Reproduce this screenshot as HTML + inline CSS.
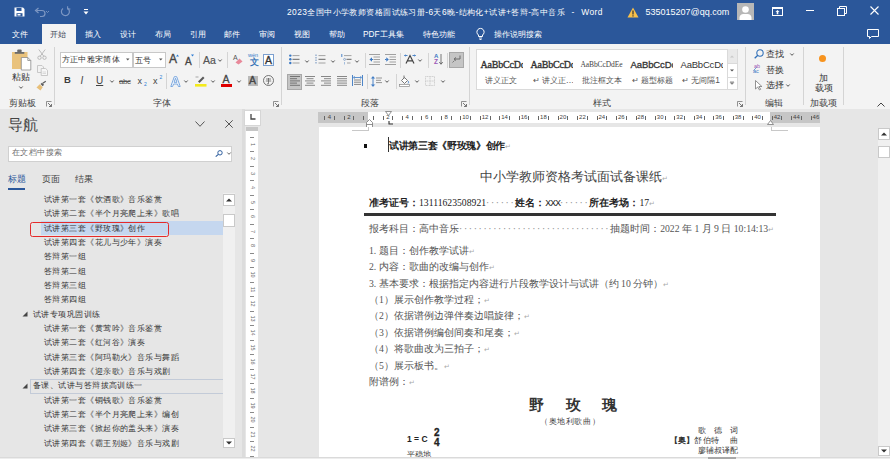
<!DOCTYPE html>
<html><head><meta charset="utf-8">
<style>
*{margin:0;padding:0;box-sizing:border-box}
html,body{width:890px;height:459px;overflow:hidden;background:#e6e6e6;font-family:"Liberation Sans",sans-serif;color:#262626}
.a{position:absolute;white-space:nowrap}
svg{position:absolute;overflow:visible}
#title{left:0;top:0;width:890px;height:44px;background:#2b579a}
.w{color:#fff}
.tab{top:29px;font-size:8.3px;line-height:10px;color:#fff}
#ribbon{left:0;top:44px;width:890px;height:65px;background:#f3f3f3}
.sep{width:1px;background:#d4d4d4}
.lbl{top:98px;font-size:9px;line-height:10px;color:#444}
.nav{font-size:8px;line-height:10px;color:#333;letter-spacing:0.44px}
.rn{font-size:6px;line-height:7px;color:#444}
.pm{color:#aaa;font-size:7px;font-family:"Liberation Sans",sans-serif;font-weight:normal}
.dots,.dots2{color:#888;font-weight:normal;letter-spacing:1.65px}
.doc{font-family:"Liberation Serif",serif;color:#222}
.doc.b{color:#444}
</style></head><body>
<div id="title" class="a"></div>
<!-- QAT -->
<svg style="left:14px;top:7px" width="11" height="10" viewBox="0 0 11 10"><path d="M0.5 0.5h8.5l1.5 1.5v7.5h-10z" fill="#fff"/><rect x="2.5" y="1" width="5" height="3" fill="#2b579a"/><rect x="2.5" y="6.2" width="6" height="3.3" fill="#2b579a"/><rect x="3.5" y="7" width="3" height="1.5" fill="#fff"/></svg>
<svg style="left:34px;top:7px" width="16" height="10" viewBox="0 0 16 10"><path d="M2.5 3.5h5.5a3 3 0 0 1 0 6h-2" fill="none" stroke="#7d97c3" stroke-width="1.2"/><path d="M4.5 1l-3 2.5 3 2.5" fill="none" stroke="#7d97c3" stroke-width="1.2"/><path d="M12 4l1.5 1.5 1.5-1.5" fill="none" stroke="#7d97c3" stroke-width="0.9"/></svg>
<svg style="left:60px;top:6px" width="11" height="11" viewBox="0 0 11 11"><path d="M7.5 2.2A4 4 0 1 1 3 2.4" fill="none" stroke="#7d97c3" stroke-width="1.2"/><path d="M7.6 0.2v2.8h2.8" fill="none" stroke="#7d97c3" stroke-width="1.1"/></svg>
<svg style="left:83px;top:9px" width="6" height="6" viewBox="0 0 6 6"><rect x="1" y="0" width="4" height="1" fill="#fff"/><path d="M0.5 2.5h5l-2.5 3z" fill="#fff"/></svg>
<div class="a w" style="left:287px;top:7px;font-size:8.4px;line-height:10px;letter-spacing:0.42px">2023全国中小学教师资格面试练习册-6天6晚-结构化+试讲+答辩-高中音乐&nbsp;&nbsp;<span style="margin-left:1px">-</span>&nbsp;&nbsp;<span style="margin-left:1px">Word</span></div>
<svg style="left:627px;top:7px" width="12" height="11" viewBox="0 0 12 11"><path d="M6 0.5L11.5 10.5H0.5z" fill="#f8c04a"/><rect x="5.4" y="3.5" width="1.2" height="4" fill="#333"/><rect x="5.4" y="8.3" width="1.2" height="1.2" fill="#333"/></svg>
<div class="a w" style="left:645.5px;top:6.5px;font-size:9px;line-height:11px">535015207@qq.com</div>
<div class="a" style="left:737px;top:3px;width:17px;height:17px;background:#b7b7b7"></div>
<svg style="left:737px;top:3px" width="17" height="17" viewBox="0 0 17 17"><circle cx="8.5" cy="6.5" r="3.3" fill="#fff"/><path d="M2.5 17v-2.5a4 4 0 0 1 4-3.5h4a4 4 0 0 1 4 3.5V17z" fill="#fff"/></svg>
<svg style="left:772px;top:7px" width="11" height="9" viewBox="0 0 11 9"><rect x="0.5" y="0.5" width="10" height="8" fill="none" stroke="#fff" stroke-width="1"/><rect x="0.5" y="0.5" width="10" height="1.5" fill="#fff"/><path d="M5.5 3l-2 2h1.2v2.2h1.6V5h1.2z" fill="#fff"/></svg>
<div class="a" style="left:806px;top:10px;width:8px;height:1px;background:#fff"></div>
<svg style="left:837px;top:6px" width="10" height="10" viewBox="0 0 10 10"><rect x="0.5" y="2.5" width="7" height="7" fill="none" stroke="#fff" stroke-width="1"/><path d="M2.5 2.5V0.5h7v7h-2" fill="none" stroke="#fff" stroke-width="1"/></svg>
<svg style="left:870px;top:6px" width="9" height="9" viewBox="0 0 9 9"><path d="M0.5 0.5l8 8M8.5 0.5l-8 8" stroke="#fff" stroke-width="1.1"/></svg>
<!-- tabs -->
<div class="a" style="left:42px;top:24px;width:34px;height:21px;background:#f3f3f3"></div>
<div class="a tab" style="left:12px">文件</div>
<div class="a tab" style="left:50px;color:#3d4656">开始</div>
<div class="a tab" style="left:84.5px">插入</div>
<div class="a tab" style="left:120px">设计</div>
<div class="a tab" style="left:154.5px">布局</div>
<div class="a tab" style="left:189.5px">引用</div>
<div class="a tab" style="left:224px">邮件</div>
<div class="a tab" style="left:258.5px">审阅</div>
<div class="a tab" style="left:294px">视图</div>
<div class="a tab" style="left:329px">帮助</div>
<div class="a tab" style="left:363px">PDF工具集</div>
<div class="a tab" style="left:423px">特色功能</div>
<svg style="left:476px;top:28px" width="9" height="12" viewBox="0 0 9 12"><path d="M2.5 8.5V7A3.6 3.6 0 1 1 6.5 7v1.5z" fill="none" stroke="#fff" stroke-width="1"/><path d="M3 10h3M3.5 11.5h2" stroke="#fff" stroke-width="0.9"/></svg>
<div class="a tab" style="left:494px">操作说明搜索</div>
<svg style="left:867px;top:29px" width="12" height="10" viewBox="0 0 12 10"><path d="M0.5 0.5h11v7h-7l-2 2v-2h-2z" fill="none" stroke="#fff" stroke-width="1"/></svg>

<div id="ribbon" class="a"></div>
<div class="a" style="left:0;top:108.5px;width:890px;height:1px;background:#e0e0e0"></div>
<!-- clipboard group -->
<svg style="left:12px;top:49px" width="20" height="22" viewBox="0 0 20 22"><rect x="0" y="3" width="15.5" height="17" fill="#e9c27c"/><rect x="2.8" y="3" width="9.5" height="1.8" fill="#6b6b6b"/><rect x="5.2" y="0.4" width="4.5" height="2.8" rx="1" fill="#6b6b6b"/><path d="M9.3 8.5h6.5l3 3v9.5h-9.5z" fill="#fff" stroke="#8c8c8c" stroke-width="0.8"/><path d="M15.8 8.5v3h3" fill="none" stroke="#8c8c8c" stroke-width="0.8"/></svg>
<div class="a" style="left:12px;top:72px;font-size:8.5px;line-height:10px;color:#333">粘贴</div>
<svg style="left:19px;top:86px" width="4" height="3" viewBox="0 0 4 3"><path d="M0.3 0.5l1.7 1.8 1.7-1.8" fill="none" stroke="#444" stroke-width="0.9"/></svg>
<svg style="left:37px;top:49px" width="10" height="11" viewBox="0 0 10 11"><path d="M1.8 0.5l5.2 7M8.2 0.5L3 7.5" stroke="#b4b4b4" stroke-width="0.9" fill="none"/><circle cx="2.5" cy="8.7" r="1.7" fill="none" stroke="#b4b4b4" stroke-width="0.9"/><circle cx="7.5" cy="8.7" r="1.7" fill="none" stroke="#b4b4b4" stroke-width="0.9"/></svg>
<svg style="left:37px;top:65px" width="11" height="11" viewBox="0 0 11 11"><path d="M0.5 0.5h4.5l1.5 1.5v5.5h-6z" fill="#f3f3f3" stroke="#bdbdbd" stroke-width="0.8"/><path d="M4.2 3.5h4.5l1.8 1.8v5.2h-6.3z" fill="#f7f7f7" stroke="#bdbdbd" stroke-width="0.8"/><path d="M5.5 7h3.5M5.5 8.5h3.5" stroke="#c8c8c8" stroke-width="0.6"/></svg>
<svg style="left:36px;top:81px" width="11" height="10" viewBox="0 0 11 10"><path d="M0.5 6.5l3.2-3.2 3 3-2.2 3.2z" fill="#e8bf78"/><path d="M4.5 3l1.5-1.3 2 2-1.3 1.5z" fill="#5d5d5d"/><path d="M6.8 2.3l3-2" stroke="#5d5d5d" stroke-width="1.2"/></svg>
<div class="a lbl" style="left:9px">剪贴板</div>
<svg style="left:46px;top:101px" width="6" height="6" viewBox="0 0 6 6"><path d="M0.5 5.5v-5h5" fill="none" stroke="#777" stroke-width="0.8"/><path d="M2 2l3.3 3.3M5.5 3v2.5H3" fill="none" stroke="#555" stroke-width="0.8"/></svg>
<div class="a sep" style="left:54px;top:47px;height:58px"></div>
<!-- font group -->
<div class="a" style="left:60px;top:52px;width:73px;height:16px;background:#fff;border:1px solid #c8c8c8"></div>
<div class="a" style="left:61.5px;top:55px;font-size:8px;line-height:10px;color:#333;letter-spacing:0.38px">方正中雅宋简体</div>
<svg style="left:126px;top:58px" width="4" height="3" viewBox="0 0 4 3"><path d="M0 0.5h3.5l-1.75 2z" fill="#555"/></svg>
<div class="a" style="left:133px;top:52px;width:33px;height:16px;background:#fff;border:1px solid #c8c8c8"></div>
<div class="a" style="left:135px;top:55px;font-size:8.4px;line-height:10px;color:#333">五号</div>
<svg style="left:158.5px;top:58px" width="4" height="3" viewBox="0 0 4 3"><path d="M0 0.5h3.5l-1.75 2z" fill="#555"/></svg>
<div class="a" style="left:169px;top:53px;font-size:12px;line-height:13px;color:#444;-webkit-text-stroke:0.35px #444">A</div>
<svg style="left:176px;top:54px" width="3" height="3" viewBox="0 0 3 3"><path d="M0 2.5l1.5-2 1.5 2z" fill="#2b7cd3"/></svg>
<div class="a" style="left:185px;top:56px;font-size:10px;line-height:11px;color:#444;-webkit-text-stroke:0.3px #444">A</div>
<svg style="left:191px;top:54px" width="3" height="3" viewBox="0 0 3 3"><path d="M0 0.5h3l-1.5 2z" fill="#2b7cd3"/></svg>
<div class="a sep" style="left:199px;top:52px;height:16px"></div>
<div class="a" style="left:203px;top:54px;font-size:10.5px;line-height:12px;color:#555;-webkit-text-stroke:0.2px #555">Aa</div>
<svg style="left:218px;top:59px" width="4" height="3" viewBox="0 0 4 3"><path d="M0.3 0.5l1.7 1.8 1.7-1.8" fill="none" stroke="#444" stroke-width="0.9"/></svg>
<div class="a sep" style="left:227px;top:52px;height:16px"></div>
<div class="a" style="left:233px;top:54px;font-size:7px;line-height:8px;color:#555">A</div>
<svg style="left:235px;top:58px" width="8" height="7" viewBox="0 0 8 7"><path d="M0.5 4.5l4-4 3 3-4 3z" fill="#e8899a"/></svg>
<div class="a" style="left:248px;top:52px;font-size:5.5px;line-height:6px;color:#3a7fc9">wén</div>
<div class="a" style="left:249.5px;top:56.5px;font-size:9px;line-height:10px;color:#2b6cb3;-webkit-text-stroke:0.25px #2b6cb3">文</div>
<div class="a" style="left:263px;top:54px;width:11px;height:12px;border:1px solid #7b9fcf;background:#fff"></div>
<div class="a" style="left:265px;top:54.5px;font-size:10.5px;line-height:11px;color:#333;-webkit-text-stroke:0.35px #333">A</div>
<div class="a" style="left:64px;top:74px;font-size:9.5px;line-height:11px;font-weight:bold;color:#3c3c3c">B</div>
<div class="a" style="left:80.5px;top:75px;font-size:10px;line-height:11px;font-style:italic;color:#444">I</div>
<div class="a" style="left:96px;top:75px;font-size:10px;line-height:11px;color:#444;text-decoration:underline">U</div>
<svg style="left:109.5px;top:80px" width="4" height="3" viewBox="0 0 4 3"><path d="M0.3 0.5l1.7 1.8 1.7-1.8" fill="none" stroke="#444" stroke-width="0.9"/></svg>
<div class="a" style="left:119px;top:77px;font-size:8px;line-height:9px;color:#555;text-decoration:line-through;letter-spacing:-0.5px">abc</div>
<div class="a" style="left:137.5px;top:75.5px;font-size:9px;line-height:10px;color:#444">x</div>
<div class="a" style="left:144px;top:81px;font-size:5px;line-height:6px;color:#2b7cd3">2</div>
<div class="a" style="left:153px;top:75.5px;font-size:9px;line-height:10px;color:#444">x</div>
<div class="a" style="left:159.5px;top:74px;font-size:5px;line-height:6px;color:#2b7cd3">2</div>
<div class="a sep" style="left:166px;top:73px;height:16px"></div>
<svg style="left:170px;top:76px" width="11" height="11" viewBox="0 0 11 11"><path d="M0.8 10.5L4.3 0.7h2.4l3.5 9.8H8.4L7.5 8h-4l-0.9 2.5zM4 6.3h3L5.5 2.2z" fill="#fff" stroke="#6d9fdc" stroke-width="0.9"/></svg>
<svg style="left:184px;top:80px" width="4" height="3" viewBox="0 0 4 3"><path d="M0.3 0.5l1.7 1.8 1.7-1.8" fill="none" stroke="#444" stroke-width="0.9"/></svg>
<svg style="left:195px;top:75px" width="12" height="12" viewBox="0 0 12 12"><path d="M3 6.5l5-5 1.5 1.5-5 5z" fill="#5a5a5a"/><path d="M0.5 2h3" stroke="#888" stroke-width="0.7"/><rect x="0" y="9" width="11.5" height="2.6" fill="#f4ea1c"/></svg>
<svg style="left:211px;top:80px" width="4" height="3" viewBox="0 0 4 3"><path d="M0.3 0.5l1.7 1.8 1.7-1.8" fill="none" stroke="#444" stroke-width="0.9"/></svg>
<div class="a" style="left:222.5px;top:74px;font-size:10.5px;line-height:11px;color:#444;-webkit-text-stroke:0.3px #444">A</div>
<div class="a" style="left:221px;top:84px;width:11px;height:3px;background:#e00000"></div>
<svg style="left:237px;top:80px" width="4" height="3" viewBox="0 0 4 3"><path d="M0.3 0.5l1.7 1.8 1.7-1.8" fill="none" stroke="#444" stroke-width="0.9"/></svg>
<div class="a" style="left:248px;top:76px;width:10px;height:10px;background:#b9b9b9"></div>
<div class="a" style="left:249px;top:75px;font-size:10.5px;line-height:11px;color:#444;-webkit-text-stroke:0.35px #444">A</div>
<svg style="left:263px;top:75px" width="11" height="11" viewBox="0 0 11 11"><circle cx="5.5" cy="5.5" r="5" fill="none" stroke="#555" stroke-width="0.8"/><path d="M3 4h5M2.8 6h5.4M5.5 3v5.5M4 8.8h2" stroke="#555" stroke-width="0.7"/></svg>
<div class="a lbl" style="left:153px">字体</div>
<svg style="left:273px;top:101px" width="6" height="6" viewBox="0 0 6 6"><path d="M0.5 5.5v-5h5" fill="none" stroke="#777" stroke-width="0.8"/><path d="M2 2l3.3 3.3M5.5 3v2.5H3" fill="none" stroke="#555" stroke-width="0.8"/></svg>
<div class="a sep" style="left:281px;top:47px;height:58px"></div>
<!-- paragraph group -->
<svg style="left:289px;top:54px" width="11" height="11" viewBox="0 0 11 11"><circle cx="1.3" cy="1.6" r="1.2" fill="#3a78c3"/><circle cx="1.3" cy="5.3" r="1.2" fill="#3a78c3"/><circle cx="1.3" cy="9" r="1.2" fill="#3a78c3"/><path d="M3.5 1.6h7M3.5 9h7" stroke="#9a9a9a" stroke-width="0.9"/><path d="M3.5 5.3h7" stroke="#555" stroke-width="0.9"/></svg>
<svg style="left:305px;top:59.5px" width="4" height="3" viewBox="0 0 4 3"><path d="M0.3 0.5l1.7 1.8 1.7-1.8" fill="none" stroke="#444" stroke-width="0.9"/></svg>
<svg style="left:315px;top:54px" width="11" height="11" viewBox="0 0 11 11"><path d="M1 0.5v10" stroke="#6d8fbd" stroke-width="1" stroke-dasharray="1.5 1"/><path d="M3.5 1.6h7M3.5 9h7" stroke="#9a9a9a" stroke-width="0.9"/><path d="M3.5 5.3h7" stroke="#555" stroke-width="0.9"/></svg>
<svg style="left:330.5px;top:59.5px" width="4" height="3" viewBox="0 0 4 3"><path d="M0.3 0.5l1.7 1.8 1.7-1.8" fill="none" stroke="#444" stroke-width="0.9"/></svg>
<svg style="left:341px;top:54px" width="11" height="11" viewBox="0 0 11 11"><path d="M0.8 0v3" stroke="#3a78c3" stroke-width="0.9"/><circle cx="3.6" cy="5.4" r="1" fill="none" stroke="#6d8fbd" stroke-width="0.7"/><path d="M3.5 8v2.5" stroke="#8fb0d8" stroke-width="0.8"/><path d="M3 1.6h7.5" stroke="#9a9a9a" stroke-width="0.9"/><path d="M5.5 5.3h5" stroke="#555" stroke-width="0.9"/><path d="M6 9h3.5" stroke="#9a9a9a" stroke-width="0.9"/></svg>
<svg style="left:355px;top:59.5px" width="4" height="3" viewBox="0 0 4 3"><path d="M0.3 0.5l1.7 1.8 1.7-1.8" fill="none" stroke="#444" stroke-width="0.9"/></svg>
<div class="a sep" style="left:365px;top:53px;height:15px"></div>
<svg style="left:369px;top:54px" width="11" height="11" viewBox="0 0 11 11"><path d="M0 0.5h11M4.5 3h6.5M4.5 5.5h6.5M4.5 8h6.5M0 10.5h11" stroke="#8a8a8a" stroke-width="0.8"/><path d="M0.5 5.5L3 3.2v4.6z" fill="#3a78c3"/><path d="M2.5 5.5h1.5" stroke="#3a78c3" stroke-width="1.2"/></svg>
<svg style="left:385px;top:54px" width="11" height="11" viewBox="0 0 11 11"><path d="M0 0.5h11M4.5 3h6.5M4.5 5.5h6.5M4.5 8h6.5M0 10.5h11" stroke="#8a8a8a" stroke-width="0.8"/><path d="M3.8 5.5L1.3 3.2v4.6z" fill="#3a78c3"/><path d="M0 5.5h1.5" stroke="#3a78c3" stroke-width="1.2"/></svg>
<div class="a sep" style="left:399.5px;top:53px;height:15px"></div>
<svg style="left:404px;top:54px" width="12" height="10" viewBox="0 0 12 10"><path d="M2 9.5L6 1.5l4 8M3.5 6.8h5" fill="none" stroke="#444" stroke-width="1.2"/><path d="M0.5 1.5h3M8.5 1.5h3" stroke="#3a78c3" stroke-width="0.9"/><path d="M1.5 0.5l-1 1 1 1M10.5 0.5l1 1-1 1" fill="none" stroke="#3a78c3" stroke-width="0.7"/></svg>
<svg style="left:418px;top:59px" width="4" height="3" viewBox="0 0 4 3"><path d="M0.3 0.5l1.7 1.8 1.7-1.8" fill="none" stroke="#444" stroke-width="0.9"/></svg>
<div class="a sep" style="left:427.5px;top:53px;height:15px"></div>
<div class="a" style="left:434px;top:53px;font-size:6px;line-height:6px;color:#3a78c3;font-weight:bold">A</div>
<div class="a" style="left:434px;top:59px;font-size:6.5px;line-height:6px;color:#9b59b6;font-weight:bold">Z</div>
<svg style="left:439px;top:54px" width="4" height="11" viewBox="0 0 4 11"><path d="M2 0v10M0.3 8l1.7 2.3 1.7-2.3" fill="none" stroke="#555" stroke-width="0.8"/></svg>
<div class="a sep" style="left:446.5px;top:53px;height:15px"></div>
<div class="a" style="left:449px;top:52px;width:15px;height:16px;background:#c5c5c5;border:1px solid #a8a8a8"></div>
<svg style="left:452px;top:55px" width="9" height="9" viewBox="0 0 9 9"><path d="M8 0.5v3.5H3" fill="none" stroke="#6a6a6a" stroke-width="1"/><path d="M4 2.5L2 4l2 1.5" fill="none" stroke="#6a6a6a" stroke-width="1"/><path d="M0.5 7.5l2-2" stroke="#6a6a6a" stroke-width="0.8"/></svg>
<div class="a" style="left:287px;top:74px;width:15px;height:16px;background:#c5c5c5;border:1px solid #a8a8a8"></div>
<svg style="left:289.5px;top:76px" width="10" height="11" viewBox="0 0 10 11"><path d="M0 0.5h10M0 2.7h7M0 4.9h10M0 7.1h7M0 9.3h10" stroke="#6a6a6a" stroke-width="0.9"/></svg>
<svg style="left:305px;top:76px" width="10" height="11" viewBox="0 0 10 11"><path d="M0 0.5h10M1.5 2.7h7M0 4.9h10M1.5 7.1h7M0 9.3h10" stroke="#7a7a7a" stroke-width="0.9"/></svg>
<svg style="left:321px;top:76px" width="10" height="11" viewBox="0 0 10 11"><path d="M0 0.5h10M3 2.7h7M0 4.9h10M3 7.1h7M0 9.3h10" stroke="#7a7a7a" stroke-width="0.9"/></svg>
<svg style="left:337px;top:76px" width="10" height="11" viewBox="0 0 10 11"><path d="M0 0.5h10M0 2.7h10M0 4.9h10M0 7.1h10M0 9.3h10" stroke="#7a7a7a" stroke-width="0.9"/></svg>
<svg style="left:352px;top:75px" width="11" height="12" viewBox="0 0 11 12"><path d="M0.5 0v11M10.5 0v11" stroke="#3a78c3" stroke-width="0.9"/><path d="M2 2.5h7M2.5 1.2L1.5 2.5l1 1.3M8.5 1.2l1 1.3-1 1.3" fill="none" stroke="#3a78c3" stroke-width="0.8"/><path d="M2 5h7M2 7.2h7M2 9.4h7" stroke="#7a7a7a" stroke-width="0.9"/></svg>
<div class="a sep" style="left:366.5px;top:74px;height:15px"></div>
<svg style="left:371px;top:76px" width="11" height="11" viewBox="0 0 11 11"><path d="M2 1v9" stroke="#3a78c3" stroke-width="0.9"/><path d="M0.3 2.5L2 0.5l1.7 2M0.3 8.5L2 10.5l1.7-2" fill="#3a78c3" stroke="#3a78c3" stroke-width="0.6"/><path d="M5 2h6M5 4.3h5M5 6.6h6" stroke="#8a8a8a" stroke-width="0.9"/></svg>
<svg style="left:385px;top:80px" width="4" height="3" viewBox="0 0 4 3"><path d="M0.3 0.5l1.7 1.8 1.7-1.8" fill="none" stroke="#444" stroke-width="0.9"/></svg>
<div class="a sep" style="left:395.5px;top:74px;height:15px"></div>
<svg style="left:399px;top:75px" width="12" height="12" viewBox="0 0 12 12"><path d="M2.5 5.5L5.5 2.5l3 3-3 3z" fill="#fff" stroke="#6a6a6a" stroke-width="0.9"/><path d="M5 0.5v3" stroke="#6a6a6a" stroke-width="0.9"/><path d="M9 6c0.8 1 0.8 2 0 2.5" fill="none" stroke="#3a78c3" stroke-width="0.9"/><rect x="0.5" y="9.5" width="10" height="2" fill="#fff" stroke="#8a8a8a" stroke-width="0.7"/></svg>
<svg style="left:415px;top:80px" width="4" height="3" viewBox="0 0 4 3"><path d="M0.3 0.5l1.7 1.8 1.7-1.8" fill="none" stroke="#444" stroke-width="0.9"/></svg>
<svg style="left:425px;top:76px" width="10" height="10" viewBox="0 0 10 10"><rect x="0.5" y="0.5" width="9" height="9" fill="none" stroke="#c8c8c8" stroke-width="0.9" stroke-dasharray="1 0.6"/><path d="M5 0.5v9M0.5 5h9" stroke="#c8c8c8" stroke-width="0.9" stroke-dasharray="1 0.6"/></svg>
<svg style="left:441px;top:80px" width="4" height="3" viewBox="0 0 4 3"><path d="M0.3 0.5l1.7 1.8 1.7-1.8" fill="none" stroke="#444" stroke-width="0.9"/></svg>
<div class="a lbl" style="left:361px">段落</div>
<svg style="left:461px;top:101px" width="6" height="6" viewBox="0 0 6 6"><path d="M0.5 5.5v-5h5" fill="none" stroke="#777" stroke-width="0.8"/><path d="M2 2l3.3 3.3M5.5 3v2.5H3" fill="none" stroke="#555" stroke-width="0.8"/></svg>
<div class="a sep" style="left:469px;top:47px;height:58px"></div>
<!-- styles -->
<div class="a" style="left:475.5px;top:48.5px;width:262px;height:41px;background:#fff;border:1px solid #dadada"></div>
<div class="a" style="left:727px;top:49px;width:10px;height:14px;background:#e9e9e9"></div>
<div class="a" style="left:727px;top:63px;width:10px;height:1px;background:#dadada"></div>
<div class="a" style="left:727px;top:77px;width:10px;height:1px;background:#dadada"></div>
<div class="a" style="left:726.5px;top:49px;width:1px;height:40px;background:#dadada"></div>
<svg style="left:730px;top:55px" width="4" height="3" viewBox="0 0 4 3"><path d="M0 2.5h4L2 0.5z" fill="#c8c8c8"/></svg>
<svg style="left:730px;top:69px" width="4" height="3" viewBox="0 0 4 3"><path d="M0 0.5h4L2 2.5z" fill="#555"/></svg>
<svg style="left:730px;top:81px" width="4" height="4" viewBox="0 0 4 4"><path d="M0 0.5h4M0 1.5h4L2 3.5z" fill="#777" stroke="#777" stroke-width="0.4"/></svg>
<div class="a" style="left:478px;top:49px;width:44.5px;height:40px;overflow:hidden">
<div class="a" style="left:2.5px;top:10px;font-family:'Liberation Serif',serif;font-size:10px;line-height:11px;color:#333;-webkit-text-stroke:0.35px #333;letter-spacing:-0.2px">AaBbCcDc</div>
<div class="a" style="left:6.5px;top:26px;font-size:8.4px;line-height:10px;color:#555">讲义正文</div></div>
<div class="a" style="left:528px;top:49px;width:44.5px;height:40px;overflow:hidden">
<div class="a" style="left:2.5px;top:10px;font-family:'Liberation Serif',serif;font-size:10px;line-height:11px;color:#333;-webkit-text-stroke:0.35px #333;letter-spacing:-0.2px">AaBbCcDc</div>
<div class="a" style="left:4.5px;top:26px;font-size:8.4px;line-height:10px;color:#555">↵ 讲义正…</div></div>
<div class="a" style="left:578px;top:49px;width:44.5px;height:40px;overflow:hidden">
<div class="a" style="left:2.5px;top:11px;font-family:'Liberation Serif',serif;font-size:7.5px;line-height:10px;color:#444;letter-spacing:-0.1px">AaBbCcDdEe</div>
<div class="a" style="left:4px;top:26px;font-size:8.4px;line-height:10px;color:#555">批注框文本</div></div>
<div class="a" style="left:628px;top:49px;width:44.5px;height:40px;overflow:hidden">
<div class="a" style="left:2.5px;top:10px;font-family:'Liberation Sans',sans-serif;font-size:9.5px;line-height:11px;color:#333;-webkit-text-stroke:0.3px #333;letter-spacing:-0.1px">AaBbCcDc</div>
<div class="a" style="left:4px;top:26px;font-size:8.4px;line-height:10px;color:#555">↵ 题型标题</div></div>
<div class="a" style="left:678px;top:49px;width:44.5px;height:40px;overflow:hidden">
<div class="a" style="left:2.5px;top:10px;font-family:'Liberation Sans',sans-serif;font-size:9.5px;line-height:11px;color:#333;letter-spacing:-0.2px">AaBbCcDdI</div>
<div class="a" style="left:4px;top:26px;font-size:8.4px;line-height:10px;color:#555">↵ 无间隔1</div></div>
<div class="a lbl" style="left:593px">样式</div>
<svg style="left:737px;top:101px" width="6" height="6" viewBox="0 0 6 6"><path d="M0.5 5.5v-5h5" fill="none" stroke="#777" stroke-width="0.8"/><path d="M2 2l3.3 3.3M5.5 3v2.5H3" fill="none" stroke="#555" stroke-width="0.8"/></svg>
<div class="a sep" style="left:745px;top:47px;height:58px"></div>
<!-- editing -->
<svg style="left:754px;top:49px" width="10" height="10" viewBox="0 0 10 10"><circle cx="6" cy="4" r="3.2" fill="none" stroke="#2f6fb8" stroke-width="1.1"/><path d="M3.8 6.2L0.7 9.3" stroke="#2f6fb8" stroke-width="1.3"/></svg>
<div class="a" style="left:766px;top:49px;font-size:8.5px;line-height:10px;color:#333">查找</div>
<svg style="left:790px;top:53px" width="4" height="3" viewBox="0 0 4 3"><path d="M0.3 0.5l1.7 1.8 1.7-1.8" fill="none" stroke="#444" stroke-width="0.9"/></svg>
<div class="a" style="left:754px;top:63.5px;font-size:5.5px;line-height:5px;color:#9b59b6">ab</div>
<div class="a" style="left:753px;top:68.5px;font-size:5.5px;line-height:5px;color:#3a78c3">ac</div>
<svg style="left:753px;top:67px" width="4" height="4" viewBox="0 0 4 4"><path d="M0.5 3.5l3-3" stroke="#3a78c3" stroke-width="0.7"/></svg>
<div class="a" style="left:766px;top:64.5px;font-size:8.5px;line-height:10px;color:#333">替换</div>
<svg style="left:755px;top:79.5px" width="8" height="10" viewBox="0 0 8 10"><path d="M0.5 0.5v8.5l2.2-2 1.8 3 1.2-0.7-1.8-2.8h3z" fill="#fff" stroke="#777" stroke-width="0.8"/></svg>
<div class="a" style="left:766px;top:80px;font-size:8.5px;line-height:10px;color:#333">选择</div>
<svg style="left:785.5px;top:84px" width="4" height="3" viewBox="0 0 4 3"><path d="M0.3 0.5l1.7 1.8 1.7-1.8" fill="none" stroke="#444" stroke-width="0.9"/></svg>
<div class="a lbl" style="left:765px">编辑</div>
<div class="a sep" style="left:803px;top:47px;height:58px"></div>
<div class="a" style="left:819px;top:55px;width:7px;height:7px;border-radius:50%;background:#f7931e"></div>
<div class="a" style="left:819px;top:72.5px;font-size:8.5px;line-height:10px;color:#333">加</div>
<div class="a" style="left:815px;top:82.5px;font-size:8.5px;line-height:10px;color:#333">载项</div>
<div class="a lbl" style="left:810px">加载项</div>
<div class="a sep" style="left:843px;top:47px;height:58px"></div>
<svg style="left:877px;top:102px" width="8" height="5" viewBox="0 0 8 5"><path d="M0.5 4.5L4 1l3.5 3.5" fill="none" stroke="#444" stroke-width="1"/></svg>
<!-- nav pane -->
<div class="a" style="left:0;top:109px;width:243px;height:350px;background:#e6e6e6"></div>
<div class="a" style="left:8px;top:115.5px;font-size:14.5px;line-height:18px;color:#444">导航</div>
<svg style="left:195px;top:121px" width="10" height="6" viewBox="0 0 10 6"><path d="M0.5 0.5L5 5.3l4.5-4.8" fill="none" stroke="#555" stroke-width="1"/></svg>
<svg style="left:225px;top:120px" width="8" height="8" viewBox="0 0 8 8"><path d="M0.3 0.3l7.4 7.4M7.7 0.3L0.3 7.7" stroke="#555" stroke-width="1"/></svg>
<div class="a" style="left:7.5px;top:145.5px;width:224.5px;height:16px;background:#fff;border:1px solid #d0d0d0"></div>
<div class="a" style="left:11.5px;top:148px;font-size:8px;line-height:10px;color:#6d6d6d;letter-spacing:0.55px">在文档中搜索</div>
<svg style="left:215px;top:150px" width="8" height="7" viewBox="0 0 8 7"><circle cx="5" cy="2.8" r="2.2" fill="none" stroke="#2f5f9f" stroke-width="1"/><path d="M3.4 4.4L0.7 6.6" stroke="#2f5f9f" stroke-width="1.2"/></svg>
<svg style="left:226.5px;top:152px" width="4" height="3" viewBox="0 0 4 3"><path d="M0.3 0.5l1.7 1.8 1.7-1.8" fill="none" stroke="#555" stroke-width="0.9"/></svg>
<div class="a" style="left:8px;top:174px;font-size:8.5px;line-height:10px;color:#2b579a">标题</div>
<div class="a" style="left:42px;top:174px;font-size:8.5px;line-height:10px;color:#444">页面</div>
<div class="a" style="left:75px;top:174px;font-size:8.5px;line-height:10px;color:#444">结果</div>
<div class="a" style="left:8px;top:188px;width:17px;height:2px;background:#2b579a"></div>
<!-- list -->
<div class="a" style="left:40.5px;top:220.5px;width:182.5px;height:14.5px;background:#c5d7ef"></div>
<div class="a" style="left:29.5px;top:379px;width:194px;height:14.5px;border:1px solid #c3cbd8"></div>
<div class="a nav" style="left:44px;top:194.8px">试讲第一套《饮酒歌》音乐鉴赏</div>
<div class="a nav" style="left:44px;top:209.1px">试讲第二套《半个月亮爬上来》歌唱</div>
<div class="a nav" style="left:44px;top:223.5px">试讲第三套《野玫瑰》创作</div>
<div class="a nav" style="left:44px;top:237.8px">试讲第四套《花儿与少年》演奏</div>
<div class="a nav" style="left:44px;top:252.2px">答辩第一组</div>
<div class="a nav" style="left:44px;top:266.5px">答辩第二组</div>
<div class="a nav" style="left:44px;top:280.8px">答辩第三组</div>
<div class="a nav" style="left:44px;top:295.2px">答辩第四组</div>
<div class="a nav" style="left:33px;top:309.5px">试讲专项巩固训练</div>
<div class="a nav" style="left:44px;top:323.9px">试讲第一套《黄莺吟》音乐鉴赏</div>
<div class="a nav" style="left:44px;top:338.2px">试讲第二套《红河谷》演奏</div>
<div class="a nav" style="left:44px;top:352.5px">试讲第三套《阿玛勒火》音乐与舞蹈</div>
<div class="a nav" style="left:44px;top:366.9px">试讲第四套《迎亲歌》音乐与戏剧</div>
<div class="a nav" style="left:33px;top:381.2px">备课、试讲与答辩拔高训练一</div>
<div class="a nav" style="left:44px;top:395.6px">试讲第一套《铜钱歌》音乐鉴赏</div>
<div class="a nav" style="left:44px;top:409.9px">试讲第二套《半个月亮爬上来》编创</div>
<div class="a nav" style="left:44px;top:424.2px">试讲第三套《掀起你的盖头来》演奏</div>
<div class="a nav" style="left:44px;top:438.6px">试讲第四套《霸王别姬》音乐与戏剧</div>
<div class="a" style="left:30px;top:222.3px;width:138.5px;height:14.8px;border:1.6px solid #e52a2a;border-radius:2.5px"></div>
<svg style="left:21.5px;top:311px" width="6" height="6" viewBox="0 0 6 6"><path d="M5.5 0.5v5h-5z" fill="#444"/></svg>
<svg style="left:21.5px;top:383px" width="6" height="6" viewBox="0 0 6 6"><path d="M5.5 0.5v5h-5z" fill="#444"/></svg>
<!-- nav scrollbar -->
<div class="a" style="left:223px;top:193px;width:12px;height:255px;background:#f0f0f0"></div>
<div class="a" style="left:223px;top:193.5px;width:12px;height:12px;background:#fff;border:1px solid #c9c9c9"></div>
<svg style="left:226px;top:197.5px" width="6" height="4" viewBox="0 0 6 4"><path d="M0 3.5h6L3 0.5z" fill="#333"/></svg>
<div class="a" style="left:223px;top:214px;width:12px;height:12.5px;background:#fff;border:1px solid #c9c9c9"></div>
<div class="a" style="left:223px;top:437.5px;width:12px;height:10px;background:#fff;border:1px solid #c9c9c9"></div>
<svg style="left:226px;top:440.5px" width="6" height="4" viewBox="0 0 6 4"><path d="M0 0.5h6L3 3.5z" fill="#333"/></svg>
<div class="a" style="left:242px;top:109px;width:3px;height:350px;background:#dcdcdc"></div>

<!-- doc area -->
<div class="a" style="left:245px;top:109px;width:645px;height:350px;background:#e6e6e6"></div>
<!-- tab selector -->
<div class="a" style="left:244px;top:110px;width:16.5px;height:15.5px;background:#fff;border:1.5px solid #d6d6d6"></div>
<svg style="left:249.5px;top:114px" width="6" height="6" viewBox="0 0 6 6"><path d="M1 0v5h4.5" fill="none" stroke="#444" stroke-width="1.3"/></svg>
<!-- vertical ruler -->
<div class="a" style="left:245.8px;top:127px;width:12.2px;height:330px;background:#fff"></div>
<div class="a" style="left:245.8px;top:127.3px;width:12.2px;height:3.5px;background:#c6c6c6"></div>
<div class="a rn" style="left:248px;top:140.8px;width:8px;text-align:center;transform:rotate(90deg);font-size:5.5px;color:#666">1</div>
<div class="a rn" style="left:248px;top:155.3px;width:8px;text-align:center;transform:rotate(90deg);font-size:5.5px;color:#666">2</div>
<div class="a rn" style="left:248px;top:169.8px;width:8px;text-align:center;transform:rotate(90deg);font-size:5.5px;color:#666">3</div>
<div class="a rn" style="left:248px;top:184.3px;width:8px;text-align:center;transform:rotate(90deg);font-size:5.5px;color:#666">4</div>
<div class="a rn" style="left:248px;top:198.8px;width:8px;text-align:center;transform:rotate(90deg);font-size:5.5px;color:#666">5</div>
<div class="a rn" style="left:248px;top:213.3px;width:8px;text-align:center;transform:rotate(90deg);font-size:5.5px;color:#666">6</div>
<div class="a rn" style="left:248px;top:227.8px;width:8px;text-align:center;transform:rotate(90deg);font-size:5.5px;color:#666">7</div>
<div class="a rn" style="left:248px;top:242.3px;width:8px;text-align:center;transform:rotate(90deg);font-size:5.5px;color:#666">8</div>
<div class="a rn" style="left:248px;top:256.8px;width:8px;text-align:center;transform:rotate(90deg);font-size:5.5px;color:#666">9</div>
<div class="a rn" style="left:248px;top:271.3px;width:8px;text-align:center;transform:rotate(90deg);font-size:5.5px;color:#666">10</div>
<div class="a rn" style="left:248px;top:285.8px;width:8px;text-align:center;transform:rotate(90deg);font-size:5.5px;color:#666">11</div>
<div class="a rn" style="left:248px;top:300.3px;width:8px;text-align:center;transform:rotate(90deg);font-size:5.5px;color:#666">12</div>
<div class="a rn" style="left:248px;top:314.8px;width:8px;text-align:center;transform:rotate(90deg);font-size:5.5px;color:#666">13</div>
<div class="a rn" style="left:248px;top:329.3px;width:8px;text-align:center;transform:rotate(90deg);font-size:5.5px;color:#666">14</div>
<div class="a rn" style="left:248px;top:343.8px;width:8px;text-align:center;transform:rotate(90deg);font-size:5.5px;color:#666">15</div>
<div class="a rn" style="left:248px;top:358.3px;width:8px;text-align:center;transform:rotate(90deg);font-size:5.5px;color:#666">16</div>
<div class="a rn" style="left:248px;top:372.8px;width:8px;text-align:center;transform:rotate(90deg);font-size:5.5px;color:#666">17</div>
<div class="a rn" style="left:248px;top:387.3px;width:8px;text-align:center;transform:rotate(90deg);font-size:5.5px;color:#666">18</div>
<div class="a rn" style="left:248px;top:401.8px;width:8px;text-align:center;transform:rotate(90deg);font-size:5.5px;color:#666">19</div>
<div class="a rn" style="left:248px;top:416.3px;width:8px;text-align:center;transform:rotate(90deg);font-size:5.5px;color:#666">20</div>
<div class="a rn" style="left:248px;top:430.8px;width:8px;text-align:center;transform:rotate(90deg);font-size:5.5px;color:#666">21</div>
<div class="a rn" style="left:248px;top:445.3px;width:8px;text-align:center;transform:rotate(90deg);font-size:5.5px;color:#666">22</div>
<div class="a" style="left:250px;top:136.6px;width:4px;height:1px;background:#8a8a8a"></div>
<div class="a" style="left:250px;top:151.1px;width:4px;height:1px;background:#8a8a8a"></div>
<div class="a" style="left:250px;top:165.6px;width:4px;height:1px;background:#8a8a8a"></div>
<div class="a" style="left:250px;top:180.1px;width:4px;height:1px;background:#8a8a8a"></div>
<div class="a" style="left:250px;top:194.6px;width:4px;height:1px;background:#8a8a8a"></div>
<div class="a" style="left:250px;top:209.1px;width:4px;height:1px;background:#8a8a8a"></div>
<div class="a" style="left:250px;top:223.6px;width:4px;height:1px;background:#8a8a8a"></div>
<div class="a" style="left:250px;top:238.1px;width:4px;height:1px;background:#8a8a8a"></div>
<div class="a" style="left:250px;top:252.6px;width:4px;height:1px;background:#8a8a8a"></div>
<div class="a" style="left:250px;top:267.1px;width:4px;height:1px;background:#8a8a8a"></div>
<div class="a" style="left:250px;top:281.6px;width:4px;height:1px;background:#8a8a8a"></div>
<div class="a" style="left:250px;top:296.1px;width:4px;height:1px;background:#8a8a8a"></div>
<div class="a" style="left:250px;top:310.6px;width:4px;height:1px;background:#8a8a8a"></div>
<div class="a" style="left:250px;top:325.1px;width:4px;height:1px;background:#8a8a8a"></div>
<div class="a" style="left:250px;top:339.6px;width:4px;height:1px;background:#8a8a8a"></div>
<div class="a" style="left:250px;top:354.1px;width:4px;height:1px;background:#8a8a8a"></div>
<div class="a" style="left:250px;top:368.6px;width:4px;height:1px;background:#8a8a8a"></div>
<div class="a" style="left:250px;top:383.1px;width:4px;height:1px;background:#8a8a8a"></div>
<div class="a" style="left:250px;top:397.6px;width:4px;height:1px;background:#8a8a8a"></div>
<div class="a" style="left:250px;top:412.1px;width:4px;height:1px;background:#8a8a8a"></div>
<div class="a" style="left:250px;top:426.6px;width:4px;height:1px;background:#8a8a8a"></div>
<div class="a" style="left:250px;top:441.1px;width:4px;height:1px;background:#8a8a8a"></div>
<div class="a" style="left:250px;top:455.6px;width:4px;height:1px;background:#8a8a8a"></div>
<!-- horizontal ruler -->
<div class="a" style="left:318.4px;top:111.8px;width:501.6px;height:11.3px;background:#fff"></div>
<div class="a" style="left:318.4px;top:111.8px;width:50px;height:11.3px;background:#c6c6c6"></div>
<div class="a" style="left:769.8px;top:111.8px;width:50.2px;height:11.3px;background:#c6c6c6"></div>
<div class="a" style="left:324.1px;top:115.5px;width:0.8px;height:4px;background:#666"></div>
<div class="a" style="left:333.8px;top:115.5px;width:0.8px;height:4px;background:#666"></div>
<div class="a" style="left:343.6px;top:115.5px;width:0.8px;height:4px;background:#666"></div>
<div class="a" style="left:353.3px;top:115.5px;width:0.8px;height:4px;background:#666"></div>
<div class="a" style="left:363.0px;top:115.5px;width:0.8px;height:4px;background:#666"></div>
<div class="a" style="left:372.8px;top:115.5px;width:0.8px;height:4px;background:#666"></div>
<div class="a" style="left:382.5px;top:115.5px;width:0.8px;height:4px;background:#666"></div>
<div class="a" style="left:392.2px;top:115.5px;width:0.8px;height:4px;background:#666"></div>
<div class="a" style="left:402.0px;top:115.5px;width:0.8px;height:4px;background:#666"></div>
<div class="a" style="left:411.7px;top:115.5px;width:0.8px;height:4px;background:#666"></div>
<div class="a" style="left:421.4px;top:115.5px;width:0.8px;height:4px;background:#666"></div>
<div class="a" style="left:431.1px;top:115.5px;width:0.8px;height:4px;background:#666"></div>
<div class="a" style="left:440.9px;top:115.5px;width:0.8px;height:4px;background:#666"></div>
<div class="a" style="left:450.6px;top:115.5px;width:0.8px;height:4px;background:#666"></div>
<div class="a" style="left:460.3px;top:115.5px;width:0.8px;height:4px;background:#666"></div>
<div class="a" style="left:470.1px;top:115.5px;width:0.8px;height:4px;background:#666"></div>
<div class="a" style="left:479.8px;top:115.5px;width:0.8px;height:4px;background:#666"></div>
<div class="a" style="left:489.5px;top:115.5px;width:0.8px;height:4px;background:#666"></div>
<div class="a" style="left:499.3px;top:115.5px;width:0.8px;height:4px;background:#666"></div>
<div class="a" style="left:509.0px;top:115.5px;width:0.8px;height:4px;background:#666"></div>
<div class="a" style="left:518.7px;top:115.5px;width:0.8px;height:4px;background:#666"></div>
<div class="a" style="left:528.4px;top:115.5px;width:0.8px;height:4px;background:#666"></div>
<div class="a" style="left:538.2px;top:115.5px;width:0.8px;height:4px;background:#666"></div>
<div class="a" style="left:547.9px;top:115.5px;width:0.8px;height:4px;background:#666"></div>
<div class="a" style="left:557.6px;top:115.5px;width:0.8px;height:4px;background:#666"></div>
<div class="a" style="left:567.4px;top:115.5px;width:0.8px;height:4px;background:#666"></div>
<div class="a" style="left:577.1px;top:115.5px;width:0.8px;height:4px;background:#666"></div>
<div class="a" style="left:586.8px;top:115.5px;width:0.8px;height:4px;background:#666"></div>
<div class="a" style="left:596.6px;top:115.5px;width:0.8px;height:4px;background:#666"></div>
<div class="a" style="left:606.3px;top:115.5px;width:0.8px;height:4px;background:#666"></div>
<div class="a" style="left:616.0px;top:115.5px;width:0.8px;height:4px;background:#666"></div>
<div class="a" style="left:625.7px;top:115.5px;width:0.8px;height:4px;background:#666"></div>
<div class="a" style="left:635.5px;top:115.5px;width:0.8px;height:4px;background:#666"></div>
<div class="a" style="left:645.2px;top:115.5px;width:0.8px;height:4px;background:#666"></div>
<div class="a" style="left:654.9px;top:115.5px;width:0.8px;height:4px;background:#666"></div>
<div class="a" style="left:664.7px;top:115.5px;width:0.8px;height:4px;background:#666"></div>
<div class="a" style="left:674.4px;top:115.5px;width:0.8px;height:4px;background:#666"></div>
<div class="a" style="left:684.1px;top:115.5px;width:0.8px;height:4px;background:#666"></div>
<div class="a" style="left:693.9px;top:115.5px;width:0.8px;height:4px;background:#666"></div>
<div class="a" style="left:703.6px;top:115.5px;width:0.8px;height:4px;background:#666"></div>
<div class="a" style="left:713.3px;top:115.5px;width:0.8px;height:4px;background:#666"></div>
<div class="a" style="left:723.0px;top:115.5px;width:0.8px;height:4px;background:#666"></div>
<div class="a" style="left:732.8px;top:115.5px;width:0.8px;height:4px;background:#666"></div>
<div class="a" style="left:742.5px;top:115.5px;width:0.8px;height:4px;background:#666"></div>
<div class="a" style="left:752.2px;top:115.5px;width:0.8px;height:4px;background:#666"></div>
<div class="a" style="left:762.0px;top:115.5px;width:0.8px;height:4px;background:#666"></div>
<div class="a" style="left:771.7px;top:115.5px;width:0.8px;height:4px;background:#666"></div>
<div class="a" style="left:781.4px;top:115.5px;width:0.8px;height:4px;background:#666"></div>
<div class="a" style="left:791.2px;top:115.5px;width:0.8px;height:4px;background:#666"></div>
<div class="a" style="left:800.9px;top:115.5px;width:0.8px;height:4px;background:#666"></div>
<div class="a" style="left:810.6px;top:115.5px;width:0.8px;height:4px;background:#666"></div>
<div class="a rn" style="left:323.4px;top:113.5px;width:12px;text-align:center">4</div>
<div class="a rn" style="left:342.8px;top:113.5px;width:12px;text-align:center">2</div>
<div class="a rn" style="left:381.8px;top:113.5px;width:12px;text-align:center">2</div>
<div class="a rn" style="left:401.2px;top:113.5px;width:12px;text-align:center">4</div>
<div class="a rn" style="left:420.7px;top:113.5px;width:12px;text-align:center">6</div>
<div class="a rn" style="left:440.1px;top:113.5px;width:12px;text-align:center">8</div>
<div class="a rn" style="left:459.6px;top:113.5px;width:12px;text-align:center">10</div>
<div class="a rn" style="left:479.1px;top:113.5px;width:12px;text-align:center">12</div>
<div class="a rn" style="left:498.5px;top:113.5px;width:12px;text-align:center">14</div>
<div class="a rn" style="left:518.0px;top:113.5px;width:12px;text-align:center">16</div>
<div class="a rn" style="left:537.4px;top:113.5px;width:12px;text-align:center">18</div>
<div class="a rn" style="left:556.9px;top:113.5px;width:12px;text-align:center">20</div>
<div class="a rn" style="left:576.4px;top:113.5px;width:12px;text-align:center">22</div>
<div class="a rn" style="left:595.8px;top:113.5px;width:12px;text-align:center">24</div>
<div class="a rn" style="left:615.3px;top:113.5px;width:12px;text-align:center">26</div>
<div class="a rn" style="left:634.7px;top:113.5px;width:12px;text-align:center">28</div>
<div class="a rn" style="left:654.2px;top:113.5px;width:12px;text-align:center">30</div>
<div class="a rn" style="left:673.7px;top:113.5px;width:12px;text-align:center">32</div>
<div class="a rn" style="left:693.1px;top:113.5px;width:12px;text-align:center">34</div>
<div class="a rn" style="left:712.6px;top:113.5px;width:12px;text-align:center">36</div>
<div class="a rn" style="left:732.0px;top:113.5px;width:12px;text-align:center">38</div>
<div class="a rn" style="left:751.5px;top:113.5px;width:12px;text-align:center">40</div>
<div class="a rn" style="left:771.0px;top:113.5px;width:12px;text-align:center">42</div>
<div class="a rn" style="left:790.4px;top:113.5px;width:12px;text-align:center">44</div>
<div class="a rn" style="left:809.9px;top:113.5px;width:12px;text-align:center">46</div>
<svg style="left:385px;top:110.5px" width="7" height="5" viewBox="0 0 7 5"><path d="M0.5 0.5h6L3.5 4.5z" fill="#fff" stroke="#777" stroke-width="0.8"/></svg>
<svg style="left:365.8px;top:119.3px" width="7" height="9" viewBox="0 0 7 9"><path d="M0.5 3.5L3.5 0.5l3 3v5h-6z" fill="#fff" stroke="#777" stroke-width="0.8"/><path d="M0.5 5.5h6" stroke="#777" stroke-width="0.8"/></svg>
<svg style="left:387.8px;top:120.8px" width="5" height="4" viewBox="0 0 5 4"><path d="M1 0v3h4" fill="none" stroke="#333" stroke-width="1.1"/></svg>
<svg style="left:767px;top:119.5px" width="7" height="5" viewBox="0 0 7 5"><path d="M0.5 4.5L3.5 0.5l3 4z" fill="#fff" stroke="#777" stroke-width="0.8"/></svg>
<!-- page -->
<div class="a" style="left:319px;top:126.8px;width:501px;height:333px;background:#fff"></div>
<div class="a" style="left:352px;top:129.5px;width:16.5px;height:1px;background:#c8c8c8"></div>
<div class="a" style="left:368px;top:126.8px;width:1px;height:3px;background:#c8c8c8"></div>
<div class="a" style="left:771px;top:129.5px;width:17px;height:1px;background:#c8c8c8"></div>
<div class="a" style="left:771px;top:126.8px;width:1px;height:3px;background:#c8c8c8"></div>
<div class="a" style="left:363.6px;top:144.3px;width:3.2px;height:3.8px;background:#111"></div>
<div class="a" style="left:388.2px;top:136.7px;width:1px;height:15.8px;background:#333"></div>
<div class="a doc" style="left:389px;top:139.5px;font-size:10px;line-height:11px;font-weight:bold;letter-spacing:-0.33px">试讲第三套《野玫瑰》创作<span class="pm">↵</span></div>
<div class="a doc" style="left:479.8px;top:169.5px;font-size:12.85px;line-height:15px;color:#444">中小学教师资格考试面试备课纸<span class="pm">↵</span></div>
<div class="a doc" style="left:369px;top:197px;font-size:9.7px;line-height:11px"><b>准考证号：</b>13111623508921<span class="dots">······</span><b>姓名：</b><span style="font-family:'Liberation Mono',monospace;letter-spacing:-0.9px">XXX</span><span class="dots">······</span><b>所在考场：</b>17<span class="pm">↵</span></div>
<div class="a" style="left:364px;top:212.5px;width:411.7px;height:3px;background:#333"></div>
<div class="a doc" style="left:369px;top:223px;font-size:9.7px;line-height:11px;color:#555">报考科目：高中音乐<span class="dots2">·······························</span>抽题时间：2022 年 1 月 9 日 10:14:13<span class="pm">↵</span></div>
<div class="a doc" style="left:369px;top:244.7px;font-size:9.7px;line-height:11px;color:#555">1. 题目：创作教学试讲<span class="pm">↵</span></div>
<div class="a doc" style="left:369px;top:261.1px;font-size:9.7px;line-height:11px;color:#555">2. 内容：歌曲的改编与创作<span class="pm">↵</span></div>
<div class="a doc" style="left:369px;top:277.5px;font-size:9.7px;line-height:11px;color:#555">3. 基本要求：根据指定内容进行片段教学设计与试讲（约 10 分钟）<span class="pm">↵</span></div>
<div class="a doc" style="left:369px;top:293.9px;font-size:9.7px;line-height:11px;color:#555">（1）展示创作教学过程；<span class="pm">↵</span></div>
<div class="a doc" style="left:369px;top:310.3px;font-size:9.7px;line-height:11px;color:#555">（2）依据谱例边弹伴奏边唱旋律；<span class="pm">↵</span></div>
<div class="a doc" style="left:369px;top:326.7px;font-size:9.7px;line-height:11px;color:#555">（3）依据谱例编创间奏和尾奏；<span class="pm">↵</span></div>
<div class="a doc" style="left:369px;top:343.1px;font-size:9.7px;line-height:11px;color:#555">（4）将歌曲改为三拍子；<span class="pm">↵</span></div>
<div class="a doc" style="left:369px;top:359.5px;font-size:9.7px;line-height:11px;color:#555">（5）展示板书。<span class="pm">↵</span></div>
<div class="a doc" style="left:369px;top:375.9px;font-size:9.7px;line-height:11px;color:#555">附谱例：<span class="pm">↵</span></div>
<div class="a doc" style="left:529px;top:397px;font-size:14.5px;line-height:17px;font-weight:bold;color:#333;letter-spacing:21.5px">野玫瑰</div>
<div class="a doc" style="left:540px;top:416.5px;font-size:8px;line-height:10px;color:#444;letter-spacing:0.6px">（奥地利歌曲）</div>
<div class="a" style="left:407px;top:434px;font-size:8.5px;line-height:10px;font-weight:bold;color:#222">1 = C</div>
<div class="a" style="left:434px;top:428px;font-size:10px;line-height:9px;font-weight:bold;color:#222;-webkit-text-stroke:0.3px #222">2</div>
<div class="a" style="left:434px;top:437.5px;font-size:10px;line-height:9px;font-weight:bold;color:#222;-webkit-text-stroke:0.3px #222">4</div>
<div class="a doc" style="left:407px;top:450px;font-size:8.3px;line-height:10px;color:#444">平稳地</div>
<div class="a doc" style="left:697.6px;top:425.5px;font-size:8.4px;line-height:10px;color:#333;letter-spacing:8.2px">歌德词</div>
<div class="a doc" style="left:669.5px;top:435.5px;font-size:8.4px;line-height:10px;color:#333;letter-spacing:0.3px"><b>【奥】</b>舒伯特<span style="margin-left:11px">曲</span></div>
<div class="a doc" style="left:697.6px;top:445.5px;font-size:8.4px;line-height:10px;color:#333">廖辅叔译配</div>
<!-- right scrollbar -->
<div class="a" style="left:877.5px;top:128px;width:12.5px;height:331px;background:#f0f0f0"></div>
<div class="a" style="left:877.8px;top:128.2px;width:12px;height:11.6px;background:#fff;border:1px solid #c9c9c9"></div>
<svg style="left:880.8px;top:132px" width="6" height="4" viewBox="0 0 6 4"><path d="M0 3.5h6L3 0.5z" fill="#333"/></svg>
<div class="a" style="left:877.8px;top:146.2px;width:12px;height:12.2px;background:#fff;border:1px solid #c9c9c9"></div>
<div class="a" style="left:877.8px;top:445.5px;width:12px;height:10px;background:#fff;border:1px solid #c9c9c9"></div>
<svg style="left:880.8px;top:448.5px" width="6" height="4" viewBox="0 0 6 4"><path d="M0 0.5h6L3 3.5z" fill="#333"/></svg>
<div class="a" style="left:0;top:457px;width:890px;height:1px;background:#dadada"></div><div class="a" style="left:0;top:458px;width:890px;height:1px;background:#ededed"></div>
<div class="a" style="left:708px;top:456.5px;width:28px;height:2.5px;background:#a8a8a8"></div>

</body></html>
